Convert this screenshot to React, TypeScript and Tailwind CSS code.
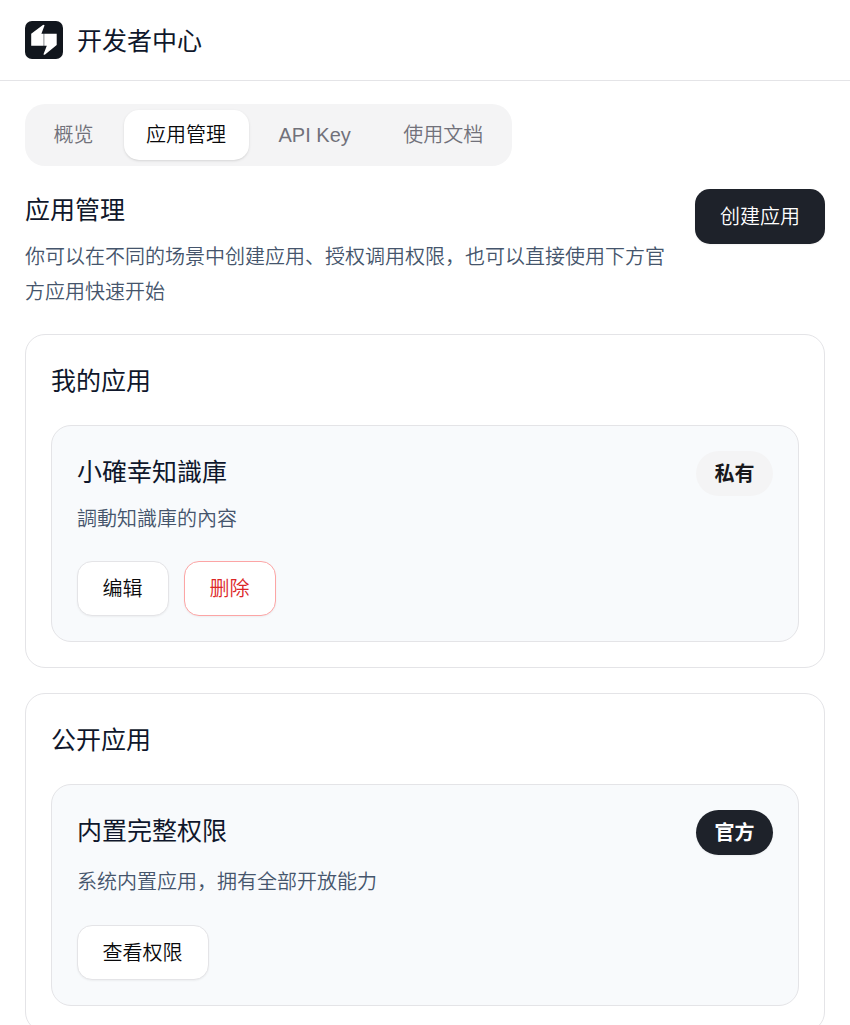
import * as React from "react";

interface AppInfo {
  name: string;
  description: string;
  official?: boolean;
}

const TABS = ["概览", "应用管理", "API Key", "使用文档"];

const Logo: React.FC = () => (
  <svg viewBox="0 0 38 38" className="size-[38px] shrink-0">
    <rect width="38" height="38" rx="7" fill="#11161d" />
    <path
      d="M6.2 12.8L18.2 3.8L19.6 4.2L16.4 12.7H18.7V24.7H6.2Z M19.2 12.7H31.7V24L19.8 33.8L18.4 33.6L21.8 24.7H19.2Z"
      fill="#fff"
    />
  </svg>
);

const Button: React.FC<{
  children: React.ReactNode;
  variant?: "primary" | "outline" | "danger";
}> = ({ children, variant = "outline" }) => {
  const colors = {
    primary: "bg-[#1e222a] text-white",
    outline: "border border-[#e4e4e7] bg-white text-[#09090b]",
    danger: "border border-[#fca5a5] bg-white text-[#dc2626]",
  };
  return (
    <button
      className={`flex h-[55px] shrink-0 items-center rounded-[15px] text-[20px] shadow-xs ${
        variant === "primary" ? "px-[25px]" : "pr-[25.5px] pl-[24.5px]"
      } ${colors[variant]}`}
    >
      {children}
    </button>
  );
};

const Section: React.FC<{ title: string; children: React.ReactNode }> = ({
  title,
  children,
}) => (
  <section className="mt-[25px] rounded-[20px] border border-[#e4e4e7] bg-white p-[25px]">
    <h2 className="mb-[24px] pt-px text-[25px] leading-[40px] font-normal">{title}</h2>
    {children}
  </section>
);

const AppCard: React.FC<{ app: AppInfo; children: React.ReactNode }> = ({
  app,
  children,
}) => (
  <div className="rounded-[20px] border border-[#e4e4e7] bg-slate-50 p-[25px]">
    <div className="flex items-start justify-between">
      <div>
        <h3 className="pt-px text-[25px] leading-[40px] font-normal">{app.name}</h3>
        <p
          className={`text-[20px] leading-[35px] text-slate-600 ${
            app.official ? "mt-[14px]" : "mt-[10px]"
          }`}
        >
          {app.description}
        </p>
      </div>
      <span
        className={`flex h-[45px] items-center rounded-full px-[18.5px] text-[20px] font-bold ${
          app.official
            ? "bg-[#1e222a] text-white shadow-xs"
            : "bg-[#f4f4f5] text-[#18181b]"
        }`}
      >
        {app.official ? "官方" : "私有"}
      </span>
    </div>
    <div className={`flex gap-[15px] ${app.official ? "mt-[25px]" : "mt-[24px]"}`}>
      {children}
    </div>
  </div>
);

const App: React.FC = () => {
  return (
    <div className="h-screen overflow-hidden bg-white font-['Liberation_Sans','Noto_Sans_CJK_SC',sans-serif] font-[350] text-slate-900">
      <header className="flex h-[81px] items-center gap-[14px] border-b border-[#e4e4e7] px-[25px]">
        <Logo />
        <h1 className="pt-[3px] text-[25px] font-normal">开发者中心</h1>
      </header>
      <main className="px-[25px] pt-[23px]">
        <nav className="flex h-[62px] w-fit gap-[7.5px] rounded-[20px] bg-[#f4f4f5] p-[6px]">
          {TABS.map((tab) => (
            <button
              key={tab}
              className={`flex items-center rounded-[15px] px-[22.5px] text-[20px] ${
                tab === "应用管理"
                  ? "bg-white text-[#09090b] shadow-sm"
                  : "text-[#71717a]"
              }`}
            >
              {tab}
            </button>
          ))}
        </nav>
        <div className="mt-[23px] flex items-start justify-between gap-[25px]">
          <div>
            <h2 className="text-[25px] leading-[42px] font-normal">应用管理</h2>
            <p className="mt-[9px] -mb-px text-[20px] leading-[35px] text-slate-600">
              你可以在不同的场景中创建应用、授权调用权限，也可以直接使用下方官方应用快速开始
            </p>
          </div>
          <Button variant="primary">创建应用</Button>
        </div>
        <Section title="我的应用">
          <AppCard app={{ name: "小確幸知識庫", description: "調動知識庫的內容" }}>
            <Button>编辑</Button>
            <Button variant="danger">删除</Button>
          </AppCard>
        </Section>
        <Section title="公开应用">
          <AppCard
            app={{
              name: "内置完整权限",
              description: "系统内置应用，拥有全部开放能力",
              official: true,
            }}
          >
            <Button>查看权限</Button>
          </AppCard>
        </Section>
      </main>
    </div>
  );
};

export default App;
